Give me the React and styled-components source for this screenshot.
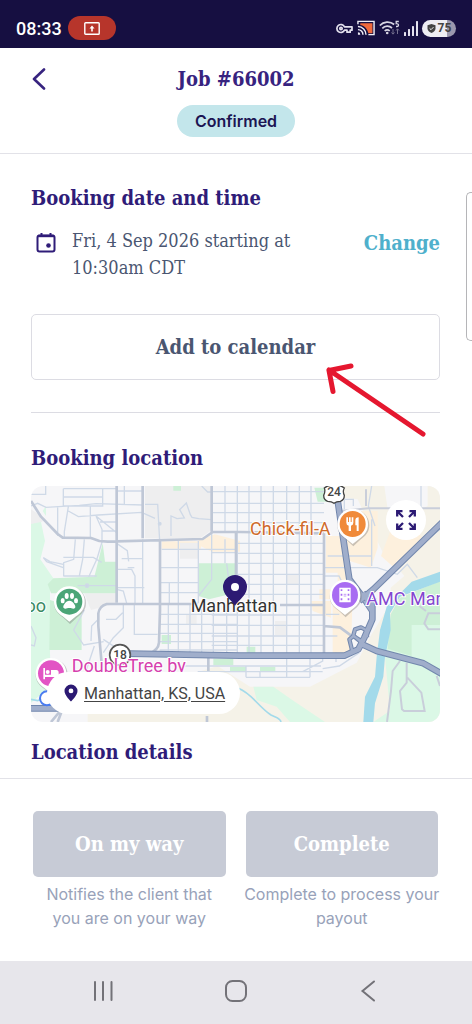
import styled, { createGlobalStyle } from "styled-components";

const slab = `"DejaVu Serif Condensed", "DejaVu Serif", serif`;
const sans = `Inter, "Liberation Sans", sans-serif`;
const roboto = `Roboto, "Liberation Sans", sans-serif`;

export default function App() {
    return (
        <>
            <GlobalStyle />
            <Screen>
                <StatusBar />
                <Header>
                    <BackButton aria-label="Back">
                        <svg width="14" height="22" viewBox="0 0 14 22" fill="none" stroke="#37237f" strokeWidth="2.6" strokeLinecap="round" strokeLinejoin="round">
                            <path d="M12 1.5 2 11l10 9.5" />
                        </svg>
                    </BackButton>
                    <Title>Job #66002</Title>
                    <Badge>Confirmed</Badge>
                </Header>
                <Main>
                    <Heading>Booking date and time</Heading>
                    <DateRow>
                        <CalendarIcon />
                        <DateText>Fri, 4 Sep 2026 starting at 10:30am CDT</DateText>
                        <ChangeLink href="#change">Change</ChangeLink>
                    </DateRow>
                    <CalendarBox>
                        <OutlineButton>Add to calendar</OutlineButton>
                        <Arrow viewBox="0 0 102 76" fill="none" stroke="#e5172f" strokeWidth="5" strokeLinecap="round" strokeLinejoin="round">
                            <path d="M98 71 4 7M26 3 4 7.500l4 21" />
                        </Arrow>
                    </CalendarBox>
                    <Divider />
                    <Heading>Booking location</Heading>
                    <MapBox>
                        <CityMap />
                        <ExpandButton aria-label="Expand map">
                            <svg width="22" height="22" viewBox="0 0 22 22" fill="none" stroke="#2c1a73" strokeWidth="2.300">
                                <path d="M2.200 7.500V2.200h5.300M2.500 2.500l5.500 5.500M14.500 2.200h5.300v5.300M19.500 2.500 14 8M2.200 14.500v5.300h5.300M2.500 19.500 8 14M14.500 19.800h5.300v-5.300M19.500 19.500 14 14" />
                            </svg>
                        </ExpandButton>
                        <Address>
                            <svg width="14" height="18" viewBox="0 0 14 18">
                                <path fill="#2c1a73" fillRule="evenodd" d="M7 .5A6.500 6.500 0 0 0 .5 7c0 4.500 6.500 10.500 6.500 10.500S13.500 11.500 13.500 7A6.500 6.500 0 0 0 7 .5zM7 4.500a2.400 2.400 0 1 1 0 4.800 2.400 2.400 0 0 1 0-4.800z" />
                            </svg>
                            <a href="#map">Manhattan, KS, USA</a>
                        </Address>
                    </MapBox>
                    <Heading>Location details</Heading>
                    <EdgeHandle />
                </Main>
                <Footer>
                    <Action>
                        <ActionButton disabled aria-describedby="way-hint">On my way</ActionButton>
                        <Hint id="way-hint">Notifies the client that you are on your way</Hint>
                    </Action>
                    <Action>
                        <ActionButton disabled aria-describedby="complete-hint">Complete</ActionButton>
                        <Hint id="complete-hint">Complete to process your payout</Hint>
                    </Action>
                </Footer>
                <NavBar>
                    <NavButton aria-label="Recent apps">
                        <svg width="22" height="22" viewBox="0 0 22 22" stroke="#737278" strokeWidth="2" strokeLinecap="round">
                            <path d="M3 2v18M11 2v18M19.500 2v18" />
                        </svg>
                    </NavButton>
                    <NavButton aria-label="Home">
                        <svg width="22" height="22" viewBox="0 0 22 22" fill="none" stroke="#737278" strokeWidth="2">
                            <rect x="1" y="1" width="20" height="20" rx="6.500" />
                        </svg>
                    </NavButton>
                    <NavButton aria-label="Back">
                        <svg width="22" height="22" viewBox="0 0 22 22" fill="none" stroke="#737278" strokeWidth="2" strokeLinecap="round">
                            <path d="M16 1.500 4.500 11 16 20.500" />
                        </svg>
                    </NavButton>
                </NavBar>
            </Screen>
        </>
    )
}

function StatusBar() {
    return (
        <StatusSC>
            <Clock>08:33</Clock>
            <RecordPill>
                <svg width="16" height="13" viewBox="0 0 16 13" fill="none" stroke="#fff" strokeWidth="1.400">
                    <rect x=".8" y=".8" width="14.400" height="11.400" rx=".8" />
                    <path d="M8 9.500V6" strokeWidth="1.600" />
                    <path d="M8 3.500 10.500 6.500h-5z" fill="#fff" stroke="none" />
                </svg>
            </RecordPill>
            <StatusIcons>
                <svg width="17" height="11" viewBox="0 0 17 11" fill="none" stroke="#e4e2ee" strokeWidth="1.700">
                    <path d="M8.500 3.800A4 4 0 1 0 8.500 7.200H11v2h3.200v-2H16V3.800z" strokeLinejoin="round" />
                    <circle cx="5" cy="5.500" r="1.200" />
                </svg>
                <svg width="18" height="16" viewBox="0 0 19 16" fill="none" stroke="#f0eef6" strokeWidth="1.500">
                    <path d="M3.500 3h12.800v10.500h-4.300C11 9 8 5.500 3.500 4.800z" fill="#f0693c" stroke="none" />
                    <path d="M1 4V1h17v14h-6M1 6.500A8.500 8.500 0 0 1 9.500 15M1 9.700A5.300 5.300 0 0 1 6.300 15" />
                    <path d="M1 12.500A2.500 2.500 0 0 1 3.500 15H1z" fill="#f0eef6" stroke="none" />
                </svg>
                <svg width="21" height="16" viewBox="0 0 21 16" fill="none" stroke="#d8d6e4" strokeWidth="1.700">
                    <path d="M.8 5.500a10.500 10.500 0 0 1 14.400-1M3.300 8.300a7 7 0 0 1 9.700-.3M5.700 11a3.600 3.600 0 0 1 5 0" />
                    <circle cx="8.200" cy="13" r="1.300" fill="#d8d6e4" stroke="none" />
                    <path d="M19.800 1.500h-2.600v2.200c2.800-.5 3 2.800.8 2.800h-1" strokeWidth="1.300" />
                    <path d="M14 9v5M12.500 12.500l1.500 1.700 1.500-1.700M18.500 14V9M17 10.500l1.500-1.700 1.500 1.700" stroke="#75708f" strokeWidth="1" />
                </svg>
                <svg width="14" height="15" viewBox="0 0 14 15" fill="#e4e2ee">
                    <rect x="0" y="11" width="2" height="4" rx=".5" />
                    <rect x="4" y="8" width="2" height="7" rx=".5" />
                    <rect x="8" y="5" width="2" height="10" rx=".5" />
                    <rect x="12" y="0" width="2" height="15" rx=".5" />
                </svg>
                <Battery>
                    <svg width="9" height="9" viewBox="0 0 9 9">
                        <path d="M4.500 0 8.500 1.200v3C8.500 6.700 6.500 8.300 4.500 9 2.500 8.300.5 6.700.5 4.200v-3z" fill="#444" />
                        <path d="m2.600 4.300 1.400 1.400 2.500-2.600" stroke="#eee" fill="none" />
                    </svg>
                    75
                </Battery>
            </StatusIcons>
        </StatusSC>
    )
}

function CalendarIcon() {
    return (
        <CalendarSvg viewBox="0 0 20 22" fill="none" stroke="#2f1c78" strokeWidth="2">
            <rect x="1.500" y="3.500" width="17" height="16" rx="2" />
            <path d="M2 4h16" strokeWidth="2.400" />
            <path d="M5.500 1v3M14.500 1v3" />
            <circle cx="12.500" cy="13.500" r="2.300" fill="#2f1c78" stroke="none" />
        </CalendarSvg>
    )
}

const gridColumns = [619, 654, 690, 727, 767, 805, 840];
const gridRows = [17, 52, 80, 110, 172, 202, 232, 265, 295, 325, 387, 418, 450, 478];
const midtownColumns = [412, 442, 477, 512, 547, 587];
const midtownRows = [385, 415, 442, 467, 492];

function Pin({ x, y, color, children }) {
    return (
        <g transform={`translate(${x} ${y})`}>
            <path d="M0-48A48 48 0 0 0-48 0C-48 22-36 32-20 44L0 63 20 44C36 32 48 22 48 0A48 48 0 0 0 0-48z" fill="#6b6b6b" opacity=".35" transform="translate(2 4)" />
            <path d="M0-46A46 46 0 0 0-46 0C-46 22-36 32-20 44L0 60 20 44C36 32 46 22 46 0A46 46 0 0 0 0-46z" fill="#fff" />
            <circle r="39" fill={color} />
            <g fill="#fff">{children}</g>
        </g>
    )
}

function CityMap() {
    return (
        <MapSvg viewBox="0 0 1227 708" preserveAspectRatio="xMidYMid slice" role="img" aria-label="Map of Manhattan, Kansas">
            <rect width="1227" height="708" fill="#f6f6f8" />

            {/* land cover */}
            <path fill="#f5f2e8" d="M170 708V665L233 640 560 540l97 62h180l140-72 42-80 60-100V250L980 40 890 30V0h337v708z" />
            <path fill="#f6f6f8" d="M950 240 1080 220 1120 270 1050 330 980 340zM1060 0h130v60l-80 40-40-30z" />
            <path fill="#fdf0dd" d="M885 150h50l30 170-5 180-55 10V340h-40v-30h55v-50h-35zM840 345h60v50l-55-20zM930 75h110v110l-20 60-80-25zM1080 130l60-20 45 60-90 80-45-40z" />
            <path fill="#fdf0dd" d="M392 166h118v22H392zM502 160l50-15 75 20v32h-85l-40-20z" />
            <path fill="#eeeeef" d="M342 0h200v132l-35 25H342zM0 70l45 30L20 115H0zM160 322h97v30l-77 20zM447 170h55v48h-55zM465 385h32v30h-32zM767 267h35v28h-35zM732 405h35v42h-35z" />
            <path fill="#dbf8e6" d="M0 114 30 108 42 165 28 220 67 277 57 300V500L60 600 0 650zM45 60 35 75 45 90z" />
            <path fill="#cdf0d6" d="M67 277 190 272 215 172 222 227h35v95H60L50 295zM57 342l95 30v120H55z" />
            <path fill="#cdf0d6" d="M502 232h112v88l-80 20-32-10zM427 0h23v14h-23zM850 5h50l20 42h-60zM392 447h28v27h-28zM547 518h60v20h-60zM687 542h46v14h-46zM647 482h26v18h-26zM597 542h48v14h-48z" />
            <path fill="#dbf8e6" d="M667 602h60l60 42 95 64H777l-40-46-60-20zM1060 490l20-100 147-50v368h-200l50-34z" />
            <path fill="#cdf0d6" d="M1079 385 1107 335 1227 285V417h-85V510L1070 488z" />
            <path fill="#a3daea" d="M1227 257 1142 287 1067 362 1047 432 1037 512 1032 572 1002 632 997 708h30l5-56 25-80 5-60 17-80-2-50 30-50 120-45z" />
            <path fill="none" stroke="#a3daea" strokeWidth="5" d="M622 607c40 15 60 55 98 80 15 8 28 10 30 21M0 640l20 4 12-6" />

            {/* local streets */}
            <g fill="none" stroke="#cfd9e7" strokeWidth="4">
                {gridColumns.map(x => <path key={x} d={`M${x} 0V500`} />)}
                {gridRows.map(y => <path key={y} d={`M${y > 160 && y < 340 ? 614 : 542} ${y}H879`} />)}
                {midtownColumns.map(x => <path key={x} d={`M${x} 356V500`} />)}
                {midtownRows.map(y => <path key={y} d={`M386 ${y}H620`} />)}
                <path d="M542 0V232M582 0V138M582 160V232M442 165V352M502 165V352M392 190H614M387 245H502M387 290H502M387 320H502M335 160V352M415 290V352M542 232V280L502 330M542 200H620M587 232l5 40-10 30" />
                <path d="M97 8V60M97 8H257M97 33H215M215 8V60L97 60M280 0V55M257 15H335M0 25H44V0M0 60l20-8 25 12 100-6 50-5 140 4V20M80 60V150M112 62l-12 75 0 18M112 75l30 17 60-5 130-8 40 18M178 60V156M195 90l18 40V170M195 90l62 50M213 135H257M207 108H257" />
                <path d="M342 55H380l6 110M420 150V90l18 8 22-2-14-25 20-20 12 35 5 8 20 4 39 3M512 0l18 18h12" />
                <path d="M133 160l-5 60-30 10V270M160 160l-5 60-10 50M213 168l-15 50-25 55M97 214h90l25 15M97 270h100M97 235l-40-8-20-12 10 12 50 18M257 172l32 22 4 32M272 218h63M257 250h45l10 20v82M257 305H340M290 245h20M257 310l20 5 10 37M140 299H257" />
                <circle cx="168" cy="299" r="5" fill="#cdd7e6" /><circle cx="386" cy="113" r="4" fill="#cdd7e6" />
                <path d="M0 420l15 35-5 25-10-3M160 372l-32 60 30 45 60-10M202 400l-20 20-2 45M217 500l30-45 30-30 0-70M310 355v90h70M217 460l60 40M225 400h30l20-20M190 480l-30 90 20 30" />
                <path d="M450 540H870M500 557H875M645 574H837M645 542V574M687 557v17M767 500v74M837 500v74M875 500v25l-60 32M985 500l-60 40-50 8M915 500v28" />
                <path d="M879 245h160l60 20 30-30 30 40M1022 100v140M1022 210H890M1022 0l-10 60 20 60M940 70v-30h27v20M879 270h45l20 40M885 385h40M879 450h40M1140 130l30-60V0M1227 130l-50 40" />
            </g>
            <g fill="none" stroke="#c9ceda" strokeWidth="6">
                <path d="M1107 525l-22 30-5 60-12 93M1127 530v60l-20 25 6 55 6 5h62l-10-55-42-45M1227 430h-35l-12-18 12-30h35M1165 360l20 15M1227 600l-10-30" />
                <path d="M927 75l85-8h215M1005 60V10" />
            </g>

            {/* arterials */}
            <g fill="none" stroke="#bfc7d6" strokeWidth="8" strokeLinejoin="round">
                <path d="M0 45 30 92 80 144 95 155 180 156 205 165 230 167 515 159 545 138H627L879 142M257 0V350M335 0V157M542 0V137M387 160V372L384 470Q382 492 355 503M615 140V300" />
                <path d="M213 545 202 420V382Q205 360 227 354H500M747 357H879M879 142V505M877 420 927 424 992 472M532 515V555M528 690v18M60 708l50-60M100 655l-20 53" />
            </g>

            {/* highways */}
            {["#7287ad", "#a0aecb"].map((color, i) => (
                <g key={color} fill="none" stroke={color} strokeWidth={i ? 14 : 20} strokeLinejoin="round">
                    <path d="M297 503 627 509H940L982 490 1000 455 1024 400V362L995 320M918 30 937 160 955 280 1000 340M1240 103 1027 310 985 345M987 472 1037 495 1177 532 1240 568M0 667H110" />
                    <path strokeWidth={i ? 7 : 13} d="M965 500l-10-40 12-10 22 14M992 470l-25-22 5-18 18-6 18 10v20M1000 345l20 30 10-40" />
                </g>
            ))}

            {/* road shields */}
            <path d="M880 6q10-8 20-8h20q10 0 20 8-6 10 0 22 0 14-12 18-12 0-19 6-7-6-19-6-12-4-12-18 6-12 2-22z" fill="#fff" stroke="#444" strokeWidth="4" />
            <Shield x="909" y="31">24</Shield>
            <circle cx="267" cy="507" r="31" fill="#fff" stroke="#555" strokeWidth="5" />
            <Shield x="267" y="519">18</Shield>

            {/* places */}
            <Pin x={965} y={114} color="#f08a3a">
                <path d="M-19-20h5v14h3v-14h5v14h3v-14h5v16q0 7-7 9v16h-7V5q-7-2-7-9zM8-10q0-10 10-10v41h-6V4H8z" />
            </Pin>
            <Pin x={942} y={327} color="#a86cf2">
                <path fillRule="evenodd" d="M-17-22h34v44h-34zM-13-17v5h5v-5zm0 13v6h5v-6zm0 14v6h5v-6zM8-17v5h5v-5zm0 13v6h5v-6zm0 14v6h5v-6z" />
                <path d="M-4-2H4M-4 3H4" stroke="#a86cf2" strokeWidth="2" />
            </Pin>
            <Pin x={115} y={347} color="#4ba577">
                <path d="M0-3c10 0 22 16 17 22-5 5-10 0-17 0s-12 5-17 0C-22 13-10-3 0-3z" />
                <ellipse cx="-20" cy="-3" rx="6" ry="8" /><ellipse cx="-8" cy="-17" rx="6" ry="9" />
                <ellipse cx="8" cy="-17" rx="6" ry="9" /><ellipse cx="20" cy="-3" rx="6" ry="8" />
            </Pin>
            <Pin x={60} y={562} color="#e254c4">
                <path d="M-23-16h5V4H0v-14h16q7 0 7 8v20h-5v-7h-36v7h-5z" /><circle cx="-10" cy="-4" r="6" />
            </Pin>
            <circle cx="48" cy="637" r="21" fill="#fff" stroke="#4a7cf0" strokeWidth="6" />

            <Place x="657" y="147" color="#cf6a2b">Chick-fil-A</Place>
            <Place x="1006" y="357" color="#8447d0">AMC Manhattan 13</Place>
            <Place x="45" y="377" color="#3a8a63" textAnchor="end">Zoo</Place>
            <Place x="122" y="557" color="#d640ae">DoubleTree by</Place>
            <Place x="479" y="377" color="#333">Manhattan</Place>
            <path fill="#2c1a73" d="M612 267a36 36 0 0 0-36 36c0 24 22 36 36 56 14-20 36-32 36-56a36 36 0 0 0-36-36z" />
            <circle cx="612" cy="303" r="12" fill="#fff" />
        </MapSvg>
    )
}

const GlobalStyle = createGlobalStyle`
    * {
        box-sizing: border-box;
    }

    body {
        margin: 0;
        background: #fff;
    }

    h1, h2, p {
        margin: 0;
    }

    button {
        padding: 0;
        border: 0;
        background: none;
    }
`;

const Screen = styled.div`
    min-height: 100vh;
    display: flex;
    flex-direction: column;
    background: #fff;
`;

const StatusSC = styled.div`
    height: 48px;
    padding: 8px 16px 0;
    display: flex;
    align-items: center;
    background: #160f41;
    color: #fff;
    font-family: ${roboto};
`;

const Clock = styled.span`
    font-size: 18px;
    font-weight: 500;
`;

const RecordPill = styled.span`
    width: 48px;
    height: 24px;
    margin-left: 6px;
    display: flex;
    align-items: center;
    justify-content: center;
    background: #b7352b;
    border-radius: 12px;
`;

const StatusIcons = styled.div`
    margin-left: auto;
    display: flex;
    align-items: center;
    gap: 4px;
`;

const Battery = styled.span`
    width: 34px;
    height: 17px;
    display: flex;
    align-items: center;
    justify-content: center;
    gap: 2px;
    background: linear-gradient(90deg, #eeedf3 75%, #9b98ae 75%);
    border-radius: 9px;
    color: #444;
    font-size: 12px;
    font-weight: 700;
`;

const Header = styled.header`
    position: relative;
    padding: 19px 30px 16px;
    display: flex;
    flex-direction: column;
    align-items: center;
    gap: 14px;
    border-bottom: 1px solid #e2e2e8;
`;

const BackButton = styled.button`
    position: absolute;
    left: 32px;
    top: 20px;
    display: flex;
`;

const Title = styled.h1`
    color: #37237f;
    font-family: ${slab};
    font-size: 20px;
    font-weight: 700;
    line-height: 24px;
`;

const Badge = styled.span`
    padding: 0 18px;
    background: #c3e6eb;
    border-radius: 16px;
    color: #1c1553;
    font-family: ${sans};
    font-size: 16px;
    font-weight: 600;
    line-height: 32px;
`;

const Main = styled.main`
    position: relative;
    flex: 1;
    padding: 32px 32px 13px 31px;
`;

const Heading = styled.h2`
    color: #2f1c78;
    font-family: ${slab};
    font-size: 20px;
    font-weight: 700;
    line-height: 24px;
`;

const DateRow = styled.div`
    margin: 17px 0 33px;
    padding-left: 5px;
    display: flex;
    align-items: flex-start;
`;

const CalendarSvg = styled.svg`
    width: 20px;
    height: 22px;
    margin: 5px 16px 0 0;
    flex-shrink: 0;
`;

const DateText = styled.p`
    max-width: 240px;
    color: #4a5671;
    font-family: ${slab};
    font-size: 18px;
    line-height: 27px;
`;

const ChangeLink = styled.a`
    margin-left: auto;
    color: #4fb0cc;
    font-family: ${slab};
    font-size: 20px;
    font-weight: 700;
    line-height: 32px;
    text-decoration: none;
`;

const CalendarBox = styled.div`
    position: relative;
`;

const OutlineButton = styled.button`
    width: 100%;
    height: 66px;
    border: 1px solid #dcdce3;
    border-radius: 5px;
    color: #4a5671;
    font-family: ${slab};
    font-size: 20px;
    font-weight: 700;
`;

const Arrow = styled.svg`
    position: absolute;
    right: 13px;
    top: 49px;
    width: 102px;
    height: 76px;
    z-index: 1;
`;

const Divider = styled.hr`
    margin: 32px 0 33px;
    border: 0;
    border-top: 1px solid #dcdce3;
`;

const MapBox = styled.div`
    position: relative;
    height: 236px;
    margin: 16px 0 18px;
    border-radius: 12px;
    overflow: hidden;
`;

const MapSvg = styled.svg`
    display: block;
    width: 100%;
    height: 100%;
`;

const Place = styled.text`
    fill: ${props => props.color};
    stroke: #fff;
    stroke-width: 6px;
    paint-order: stroke;
    font-family: ${roboto};
    font-size: 54px;
`;

const Shield = styled.text`
    fill: #444;
    font-family: ${roboto};
    font-size: 36px;
    font-weight: 500;
    text-anchor: middle;
`;

const ExpandButton = styled.button`
    position: absolute;
    right: 14px;
    top: 14px;
    width: 40px;
    height: 40px;
    display: flex;
    align-items: center;
    justify-content: center;
    background: #fff;
    border-radius: 50%;
`;

const Address = styled.div`
    position: absolute;
    left: 16px;
    bottom: 8px;
    height: 42px;
    padding: 0 15px 0 17px;
    display: flex;
    align-items: center;
    gap: 6px;
    background: #fff;
    border-radius: 21px;
    font-family: ${roboto};
    font-size: 16px;

    a {
        color: #444;
        text-underline-offset: 2px;
    }
`;

const EdgeHandle = styled.div`
    position: absolute;
    right: 0;
    top: 38px;
    width: 6px;
    height: 149px;
    border: 1px solid #b5b5b8;
    border-right: 0;
    border-radius: 5px 0 0 5px;
`;

const Footer = styled.footer`
    padding: 32px 34px 31px 33px;
    display: grid;
    grid-template-columns: 1fr 1fr;
    gap: 20px;
    border-top: 1px solid #e2e2e8;
`;

const Action = styled.div`
    display: flex;
    flex-direction: column;
    gap: 5px;
`;

const ActionButton = styled.button`
    height: 66px;
    background: #c7cbd6;
    border-radius: 5px;
    color: #fff;
    font-family: ${slab};
    font-size: 20px;
    font-weight: 700;
`;

const Hint = styled.p`
    margin: 0 -2px;
    color: #98a2b9;
    font-family: ${sans};
    font-size: 16px;
    line-height: 24px;
    text-align: center;
`;

const NavBar = styled.nav`
    height: 63px;
    padding: 0 37px 4px;
    display: grid;
    grid-template-columns: repeat(3, 1fr);
    background: #e7e6eb;
`;

const NavButton = styled.button`
    display: flex;
    align-items: center;
    justify-content: center;
`;
